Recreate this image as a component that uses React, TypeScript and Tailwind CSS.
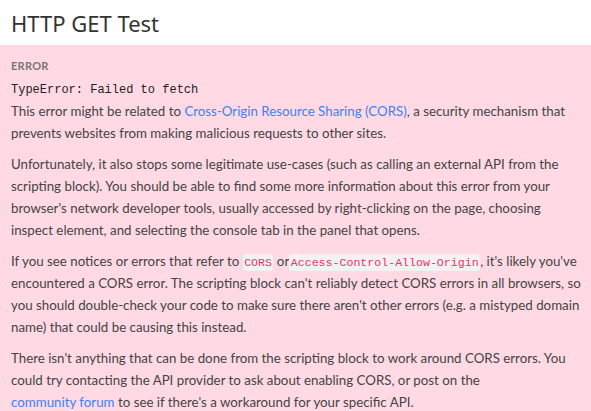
const Code = ({ children }: { children: React.ReactNode }) => (
  <code className="rounded-[3px] bg-[#f3f1f2] px-[1.5px] py-[2px] font-['Liberation_Mono',monospace] text-[11.6px] leading-none text-[#e8336b]">
    {children}
  </code>
);

const Link = ({ children }: { children: React.ReactNode }) => (
  <a href="#" className="whitespace-nowrap text-[#3b82f6]">
    {children}
  </a>
);

export default function App() {
  return (
    <div className="min-h-[411px] w-[591px] bg-white font-['Lato',sans-serif] text-[#444]">
      <div className="flex h-[45px] items-center px-[11px]">
        <h1 className="font-['Noto_Sans',sans-serif] text-[22px] leading-none text-[#333]">HTTP GET Test</h1>
      </div>
      <div className="min-h-[366px] bg-[#ffd9e3] pt-[13px] pr-[7px] pb-2 pl-[11px] text-[13.3px] leading-[22px]">
        <div className="text-[11px] font-bold leading-[16px] tracking-wide text-[#777]">ERROR</div>
        <div className="mt-[6px] font-['Liberation_Mono',monospace] text-[12px] leading-[20px] text-[#222]">
          TypeError: Failed to fetch
        </div>
        <p>
          This error might be related to <Link>Cross-Origin Resource Sharing (CORS)</Link>, a security mechanism
          that prevents websites from making malicious requests to other sites.
        </p>
        <p className="mt-[9px]">
          Unfortunately, it also stops some legitimate use-cases (such as calling an external API from the
          scripting block). You should be able to find some more information about this error from your
          browser's network developer tools, usually accessed by right-clicking on the page, choosing inspect
          element, and selecting the console tab in the panel that opens.
        </p>
        <p className="mt-[9px]">
          If you see notices or errors that refer to <Code>CORS</Code> or<Code>Access-Control-Allow-Origin</Code>,
          it's likely you've encountered a CORS error. The scripting block can't reliably detect CORS errors in
          all browsers, so you should double-check your code to make sure there aren't other errors (e.g. a
          mistyped domain name) that could be causing this instead.
        </p>
        <p className="mt-[9px]">
          There isn't anything that can be done from the scripting block to work around CORS errors. You could
          try contacting the API provider to ask about enabling CORS, or post on the{" "}
          <Link>community forum</Link> to see if there's a workaround for your specific API.
        </p>
      </div>
    </div>
  );
}
